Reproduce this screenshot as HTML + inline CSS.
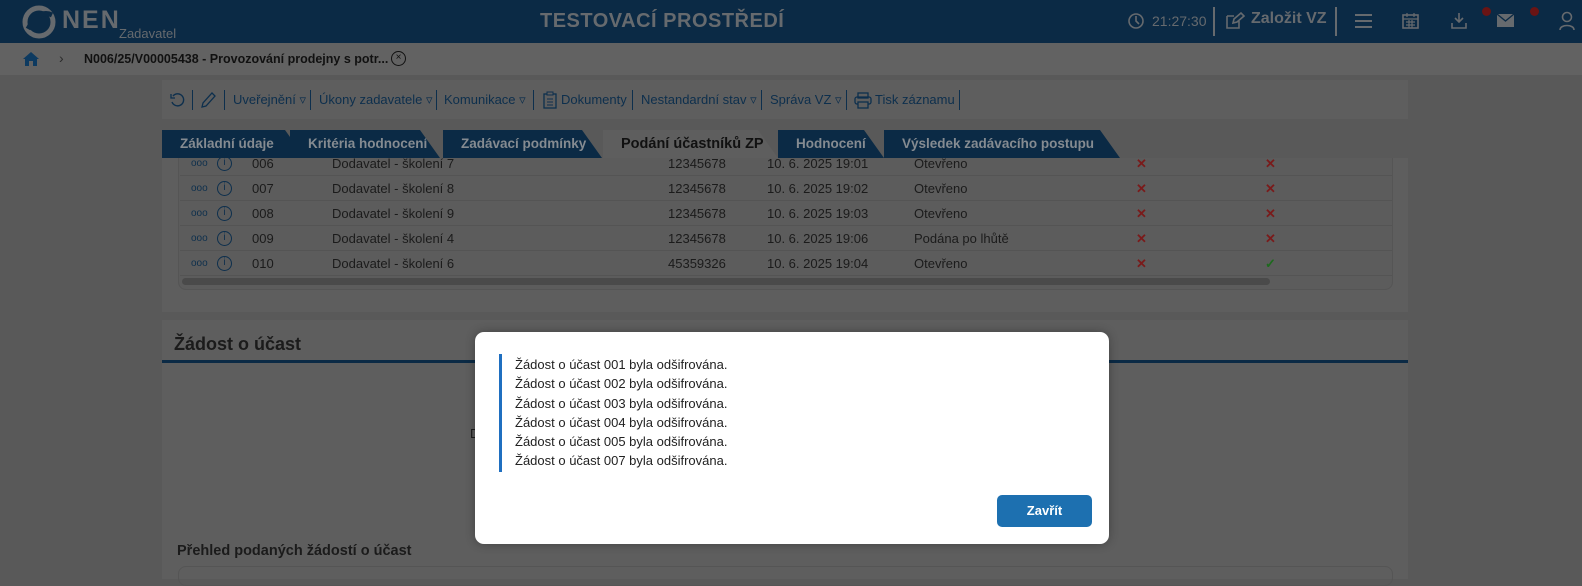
<!DOCTYPE html>
<html><head><meta charset="utf-8"><style>
*{margin:0;padding:0;box-sizing:border-box}
body{width:1582px;height:579px;overflow:hidden;background:#595959;font-family:"Liberation Sans",sans-serif;position:relative;color:#1b1b1b}
.abs{position:absolute}
.hdr{left:0;top:0;width:1582px;height:43px;background:#0b2a45}
.bc{left:0;top:43px;width:1582px;height:32px;background:#626262}
.panel{background:#5e5e5e}
.tab{position:absolute;top:130px;height:28px;background:#0b2a45;color:#858b91;font-weight:bold;font-size:13.5px;line-height:28px;padding-left:18px;clip-path:polygon(0 0,calc(100% - 20px) 0,100% 100%,0 100%)}
.row{position:absolute;left:180px;width:1212px;height:25px;border-bottom:1px solid #545454;font-size:13px;line-height:25px}
.row span{position:absolute;top:0}
.row .i{left:37px;top:5px;width:15px;height:15px;border:1.2px solid #0d2f4d;border-radius:50%;color:#0d2f4d;font-size:10px;line-height:12px;text-align:center}
.x{color:#7a1a1a;font-weight:bold;font-size:13px}
.tb{font-size:13px;color:#0d2f4d;position:absolute;top:92px}
.sep{position:absolute;top:90px;width:1px;height:20px;background:#0d2f4d}
</style></head><body>
<div class="abs hdr"></div>
<svg class="abs" style="left:22px;top:5px" width="34" height="34" viewBox="0 0 34 34"><circle cx="17" cy="17" r="14" fill="none" stroke="#666a6e" stroke-width="5"/><path d="M6 24 Q17 4 30 10" stroke="#0b2a45" stroke-width="5" fill="none"/></svg>
<div class="abs" style="left:62px;top:6px;font-size:25px;font-weight:bold;color:#666a6e;letter-spacing:2px">NEN</div>
<div class="abs" style="left:119px;top:26px;font-size:13px;color:#666a6e">Zadavatel</div>
<div class="abs" style="left:540px;top:10px;font-size:20px;font-weight:bold;color:#666a6e;letter-spacing:.5px">TESTOVACÍ PROSTŘEDÍ</div>
<svg class="abs" style="left:1127px;top:12px" width="18" height="18"><circle cx="9" cy="9" r="7" fill="none" stroke="#666a6e" stroke-width="1.6"/><path d="M9 4v5l3 3" stroke="#666a6e" stroke-width="1.6" fill="none"/></svg>
<div class="abs" style="left:1152px;top:13px;font-size:14px;color:#666a6e">21:27:30</div>
<div class="abs" style="left:1213px;top:7px;width:2px;height:29px;background:#666a6e"></div>
<svg class="abs" style="left:1225px;top:12px" width="20" height="18"><path d="M2 4h7M2 4v12h12v-7M8 11l1-4 7-6 3 3-7 6z" stroke="#666a6e" stroke-width="1.6" fill="none"/></svg>
<div class="abs" style="left:1251px;top:10px;font-size:16px;font-weight:bold;color:#666a6e">Založit VZ</div>
<div class="abs" style="left:1335px;top:7px;width:2px;height:29px;background:#666a6e"></div>
<svg class="abs" style="left:1355px;top:13px" width="18" height="16"><path d="M0 2h17M0 8h17M0 14h17" stroke="#666a6e" stroke-width="2"/></svg>
<svg class="abs" style="left:1402px;top:12px" width="18" height="18"><rect x="1" y="3" width="15" height="13" fill="none" stroke="#666a6e" stroke-width="1.6"/><path d="M1 7h15M5 1v4M12 1v4M4 10h9M4 13h9M7 8v8M10 8v8" stroke="#666a6e" stroke-width="1.2"/></svg>
<svg class="abs" style="left:1450px;top:12px" width="20" height="18"><path d="M9 1v9M5 6l4 4 4-4M2 11v5h14v-5" stroke="#666a6e" stroke-width="1.6" fill="none"/></svg>
<div class="abs" style="left:1482px;top:7px;width:9px;height:9px;border-radius:50%;background:#6a1414"></div>
<svg class="abs" style="left:1497px;top:14px" width="18" height="14"><rect x="0" y="0" width="17" height="13" fill="#666a6e"/><path d="M0 0l8.5 7L17 0" stroke="#0b2a45" stroke-width="1.3" fill="none"/></svg>
<div class="abs" style="left:1530px;top:7px;width:9px;height:9px;border-radius:50%;background:#6a1414"></div>
<svg class="abs" style="left:1559px;top:11px" width="18" height="20"><circle cx="8" cy="6" r="4.5" fill="none" stroke="#666a6e" stroke-width="1.6"/><path d="M1 19c0-6 14-6 14 0" stroke="#666a6e" stroke-width="1.6" fill="none"/></svg>

<div class="abs bc"></div>
<svg class="abs" style="left:22px;top:51px" width="18" height="16"><path d="M9 1L1 8h2v7h4v-5h4v5h4V8h2z" fill="#0d3a60"/></svg>
<div class="abs" style="left:59px;top:50px;font-size:14px;color:#2b2b2b">›</div>
<div class="abs" style="left:84px;top:52px;font-size:12.5px;font-weight:bold;color:#111">N006/25/V00005438 - Provozování prodejny s potr...</div>
<div class="abs" style="left:391px;top:51px;width:15px;height:15px;border:1.3px solid #111;border-radius:50%;font-size:10px;line-height:12px;text-align:center;color:#111">×</div>

<div class="abs panel" style="left:162px;top:80px;width:1246px;height:39px"></div>
<svg class="abs" style="left:169px;top:91px" width="18" height="18"><path d="M4 5a6 6 0 1 1-1 6" stroke="#0d2f4d" stroke-width="1.4" fill="none"/><path d="M2 3v4h4" stroke="#0d2f4d" stroke-width="1.3" fill="none"/></svg>
<div class="sep" style="left:192px"></div>
<svg class="abs" style="left:200px;top:91px" width="18" height="18"><path d="M2 16l1-4 9-10 3 3-9 10z" stroke="#0d2f4d" stroke-width="1.3" fill="none"/></svg>
<div class="sep" style="left:224px"></div>
<div class="tb" style="left:233px">Uveřejnění ▿</div><div class="sep" style="left:310px"></div>
<div class="tb" style="left:319px">Úkony zadavatele ▿</div><div class="sep" style="left:436px"></div>
<div class="tb" style="left:444px">Komunikace ▿</div><div class="sep" style="left:533px"></div>
<svg class="abs" style="left:542px;top:91px" width="16" height="18"><rect x="2" y="3" width="12" height="14" fill="none" stroke="#0d2f4d" stroke-width="1.3"/><rect x="5" y="1" width="6" height="3" fill="#5e5e5e" stroke="#0d2f4d"/><path d="M5 8h6M5 11h6M5 14h6" stroke="#0d2f4d"/></svg>
<div class="tb" style="left:561px">Dokumenty</div><div class="sep" style="left:632px"></div>
<div class="tb" style="left:641px">Nestandardní stav ▿</div><div class="sep" style="left:761px"></div>
<div class="tb" style="left:770px">Správa VZ ▿</div><div class="sep" style="left:846px"></div>
<svg class="abs" style="left:854px;top:92px" width="18" height="17"><rect x="4" y="1" width="10" height="5" fill="none" stroke="#0d2f4d" stroke-width="1.3"/><rect x="1" y="5" width="16" height="7" rx="2" fill="none" stroke="#0d2f4d" stroke-width="1.3"/><rect x="4" y="10" width="10" height="6" fill="#5e5e5e" stroke="#0d2f4d" stroke-width="1.3"/></svg>
<div class="tb" style="left:875px">Tisk záznamu</div><div class="sep" style="left:959px"></div>

<div class="abs panel" style="left:162px;top:158px;width:1246px;height:154px"></div>
<div class="abs" style="left:178px;top:158px;width:1215px;height:132px;border:1px solid #555;border-top:none;border-radius:0 0 8px 8px;background:#5c5c5c"></div>
<div class="abs" style="left:182px;top:278px;width:1088px;height:7px;border-radius:4px;background:#4a4a4a"></div>

<div class="row" style="top:151px"><span style="left:11px;color:#0d2f4d;font-size:10px">ooo</span><span class="i">i</span><span style="left:72px">006</span><span style="left:152px">Dodavatel - školení 7</span><span style="left:488px">12345678</span><span style="left:587px">10. 6. 2025 19:01</span><span style="left:734px">Otevřeno</span><span class="x" style="left:956px">✕</span><span class="x" style="left:1085px">✕</span></div>
<div class="row" style="top:176px"><span style="left:11px;color:#0d2f4d;font-size:10px">ooo</span><span class="i">i</span><span style="left:72px">007</span><span style="left:152px">Dodavatel - školení 8</span><span style="left:488px">12345678</span><span style="left:587px">10. 6. 2025 19:02</span><span style="left:734px">Otevřeno</span><span class="x" style="left:956px">✕</span><span class="x" style="left:1085px">✕</span></div>
<div class="row" style="top:201px"><span style="left:11px;color:#0d2f4d;font-size:10px">ooo</span><span class="i">i</span><span style="left:72px">008</span><span style="left:152px">Dodavatel - školení 9</span><span style="left:488px">12345678</span><span style="left:587px">10. 6. 2025 19:03</span><span style="left:734px">Otevřeno</span><span class="x" style="left:956px">✕</span><span class="x" style="left:1085px">✕</span></div>
<div class="row" style="top:226px"><span style="left:11px;color:#0d2f4d;font-size:10px">ooo</span><span class="i">i</span><span style="left:72px">009</span><span style="left:152px">Dodavatel - školení 4</span><span style="left:488px">12345678</span><span style="left:587px">10. 6. 2025 19:06</span><span style="left:734px">Podána po lhůtě</span><span class="x" style="left:956px">✕</span><span class="x" style="left:1085px">✕</span></div>
<div class="row" style="top:251px"><span style="left:11px;color:#0d2f4d;font-size:10px">ooo</span><span class="i">i</span><span style="left:72px">010</span><span style="left:152px">Dodavatel - školení 6</span><span style="left:488px">45359326</span><span style="left:587px">10. 6. 2025 19:04</span><span style="left:734px">Otevřeno</span><span class="x" style="left:956px">✕</span><span style="left:1085px;color:#1d6a1d;font-weight:bold">✓</span></div>

<div class="abs" style="left:162px;top:125px;width:1246px;height:33px;background:#595959"></div>
<div class="tab" style="left:162px;width:143px">Základní údaje</div>
<div class="tab" style="left:290px;width:150px">Kritéria hodnocení</div>
<div class="tab" style="left:443px;width:159px">Zadávací podmínky</div>
<div class="tab" style="left:603px;width:175px;background:#5e5e5e;color:#111;font-size:14.5px">Podání účastníků ZP</div>
<div class="tab" style="left:778px;width:106px">Hodnocení</div>
<div class="tab" style="left:884px;width:236px">Výsledek zadávacího postupu</div>

<div class="abs panel" style="left:162px;top:320px;width:1246px;height:259px"></div>
<div class="abs" style="left:174px;top:334px;font-size:18px;font-weight:bold;color:#1b1b1b">Žádost o účast</div>
<div class="abs" style="left:162px;top:360px;width:1246px;height:3px;background:#0b2a45"></div>
<div class="abs" style="left:470px;top:426px;font-size:13px">D</div>
<div class="abs" style="left:177px;top:543px;font-size:14.5px;font-weight:bold">Přehled podaných žádostí o účast</div>
<div class="abs" style="left:178px;top:566px;width:1215px;height:20px;border:1px solid #555;border-radius:8px"></div>

<div class="abs" style="left:475px;top:332px;width:634px;height:212px;background:#fff;border-radius:9px;box-shadow:0 0 10px rgba(0,0,0,.3)"></div>
<div class="abs" style="left:499px;top:354px;width:3px;height:118px;background:#1f6fc0"></div>
<div class="abs" style="left:515px;top:355px;font-size:13px;line-height:19.3px;color:#222">Žádost o účast 001 byla odšifrována.<br>Žádost o účast 002 byla odšifrována.<br>Žádost o účast 003 byla odšifrována.<br>Žádost o účast 004 byla odšifrována.<br>Žádost o účast 005 byla odšifrována.<br>Žádost o účast 007 byla odšifrována.</div>
<div class="abs" style="left:997px;top:495px;width:95px;height:32px;background:#1d70b0;border-radius:5px;color:#fff;font-weight:bold;font-size:13px;line-height:32px;text-align:center">Zavřít</div>
</body></html>
